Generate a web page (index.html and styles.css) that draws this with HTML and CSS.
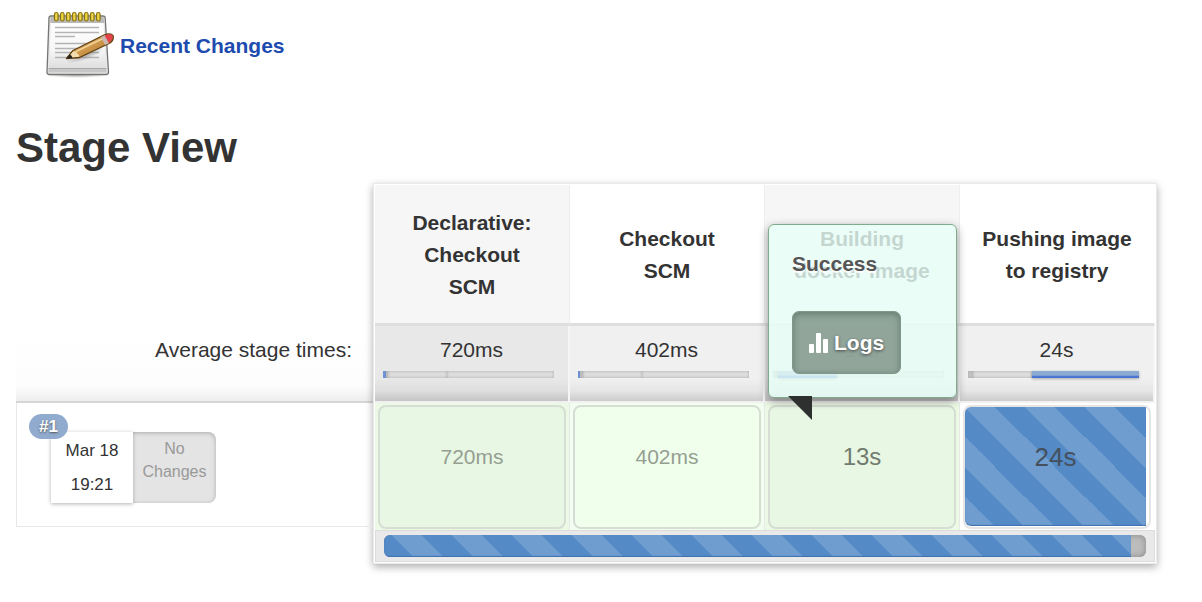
FILE: index.html
```html
<!DOCTYPE html>
<html lang="en">
<head>
<meta charset="utf-8">
<title>Stage View</title>
<link rel="stylesheet" href="styles.css">
</head>
<body>
<main class="page">
  <a class="recent" href="#changes">
    <svg class="notepad" viewBox="0 0 72 72" aria-hidden="true">
      <defs>
        <linearGradient id="paper" x1="0" y1="0" x2="0" y2="1"><stop offset="0" stop-color="#fff"/><stop offset=".6" stop-color="#f6f6f6"/><stop offset="1" stop-color="#dedede"/></linearGradient>
        <linearGradient id="wood" x1="0" y1="0" x2="1" y2="1"><stop offset="0" stop-color="#e9c07c"/><stop offset=".5" stop-color="#d09a4d"/><stop offset="1" stop-color="#a06c25"/></linearGradient>
        <radialGradient id="shade"><stop offset="0" stop-color="#777" stop-opacity=".6"/><stop offset="1" stop-color="#777" stop-opacity="0"/></radialGradient>
      </defs>
      <ellipse cx="35" cy="67" rx="32" ry="3" fill="url(#shade)"/>
      <path d="M9 8h52q2 0 2.200 2l3.300 54q0 2.500-2.500 2.500H7.500Q5 66.500 5 64L7 10q0-2 2-2z" fill="#e8e8e8" stroke="#737571" stroke-width="1.300"/>
      <path d="M8.500 9h53l.7 6H8.200z" fill="#b9bab7"/>
      <path d="M9 15h52.500L64 60H7z" fill="url(#paper)"/>
      <path d="M6.500 61h58l.2 3.500H6.300z" fill="#c7c7c7"/>
      <path d="M6.500 60.500h58" stroke="#aaa"/>
      <path d="M13 19.500h44M13 24.500h44M13 28.500h20M13 35.500h44M13 40.500h44M13 44.500h44M13 49.500h44" stroke="#b4b4b4" stroke-width="1.500"/>
      <ellipse cx="43" cy="47" rx="20" ry="5" fill="url(#shade)" transform="rotate(-20 43 47)"/>
      <g fill="#ead344" stroke="#8a7210" stroke-width="1.200">
        <rect x="12.500" y="4.500" width="3.600" height="8.500" rx="1.800"/><rect x="18.500" y="4.500" width="3.600" height="8.500" rx="1.800"/><rect x="24.500" y="4.500" width="3.600" height="8.500" rx="1.800"/><rect x="30.500" y="4.500" width="3.600" height="8.500" rx="1.800"/><rect x="36.500" y="4.500" width="3.600" height="8.500" rx="1.800"/><rect x="42.500" y="4.500" width="3.600" height="8.500" rx="1.800"/><rect x="48.500" y="4.500" width="3.600" height="8.500" rx="1.800"/><rect x="54.500" y="4.500" width="3.600" height="8.500" rx="1.800"/>
      </g>
      <path d="M24.500 50.500L31 42.500 62 27q7-2.500 9 .5 1.200 4.500-3 7.500L37.500 49.500z" fill="url(#wood)" stroke="#5e3d10" stroke-width="1.300" stroke-linejoin="round"/>
      <path d="M34 43.500L64 29" stroke="#f3d298" stroke-width="1.500"/>
      <path d="M26 49.800l5.300-6.600 3.200.8 1 2 1.500.8.3 2z" fill="#f3dcae"/>
      <path d="M24.500 50.500l3.200-4q2.200.6 2.800 3.400z" fill="#222"/>
      <path d="M59 29l4-1.700 3.800 7.900-3.800 1.700z" fill="#c9b9b0"/>
      <path d="M62.600 27.400q6.200-2.200 7.900.3 1 4.200-3.700 7.100z" fill="#e5414a"/>
    </svg>
    <span>Recent Changes</span>
  </a>

  <h1 class="title">Stage View</h1>

  <div class="stages">
    <section class="side">
      <div class="side-average">Average stage times:</div>
      <div class="build">
        <span class="badge">#1</span>
        <div class="card">
          <div class="card-date"><span>Mar 18</span><span>19:21</span></div>
          <div class="card-changes">No<br>Changes</div>
        </div>
      </div>
    </section>

    <section class="board">
      <table class="grid">
        <thead>
          <tr>
            <th scope="col">Declarative:<br>Checkout<br>SCM</th>
            <th scope="col">Checkout<br>SCM</th>
            <th scope="col">Building<br>docker image</th>
            <th scope="col">Pushing image<br>to registry</th>
          </tr>
        </thead>
        <tbody>
          <tr class="average">
            <td>720ms<div class="meter"><i class="lead tick"></i><i class="mid"></i><i class="rest"></i></div></td>
            <td>402ms<div class="meter"><i class="lead tick small"></i><i class="mid"></i><i class="rest"></i></div></td>
            <td>13s<div class="meter"><i class="lead"></i><i class="mid on"></i><i class="rest"></i></div></td>
            <td>24s<div class="meter"><i class="lead"></i><i class="mid"></i><i class="rest on"></i></div></td>
          </tr>
          <tr class="run">
            <td><div class="box">720ms</div></td>
            <td><div class="box">402ms</div></td>
            <td class="hovered">
              <div class="box">13s</div>
              <div class="popup" role="dialog" aria-label="Stage status">
                <strong class="popup-status">Success</strong>
                <button class="logs" type="button">
                  <svg class="bars" viewBox="0 0 20 20" aria-hidden="true"><rect y="11" width="5" height="9" rx="1"/><rect x="7" width="5" height="20" rx="1"/><rect x="14" y="6" width="5" height="14" rx="1"/></svg>
                  Logs
                </button>
              </div>
            </td>
            <td class="running"><div class="box"><div class="fill">24s</div></div></td>
          </tr>
        </tbody>
      </table>
      <div class="footer">
        <div class="progress" role="progressbar" aria-label="Build progress" aria-valuenow="98" aria-valuemin="0" aria-valuemax="100"><div class="progress-fill" style="width: 98%"></div></div>
      </div>
    </section>
  </div>
</main>
</body>
</html>
```

FILE: styles.css
```css
* { box-sizing: border-box; }

body {
  margin: 0;
  background: #fff;
  color: #333;
  font: 21px/32px "Liberation Sans", Arial, sans-serif;
}

.page { padding: 8px 45px 32px 16px; }

.recent {
  display: inline-flex;
  align-items: center;
  gap: 6px;
  padding-left: 26px;
  color: #204bae;
  font-weight: bold;
  text-decoration: none;
  vertical-align: top;
}

.notepad { width: 72px; height: 72px; }
.recent span { padding-top: 4px; }

.title {
  margin: 44px 0 11px;
  font-size: 42px;
  line-height: 48px;
}

.stages { display: flex; align-items: flex-start; }

.side { flex: 0 0 357px; padding-top: 143px; }

.side-average {
  height: 77px;
  padding: 8px 21px 0 0;
  border-bottom: 2px solid #d5d5d5;
  background: linear-gradient(#fff, #fdfdfd 80%, #ededed);
  text-align: right;
}

.build {
  position: relative;
  height: 124px;
  padding: 29px 0 0 34px;
  border: solid #e8e8e8;
  border-width: 0 0 1px 1px;
}

.badge {
  position: absolute;
  top: 11px;
  left: 12px;
  padding: 0 10px;
  border-radius: 13px;
  background: #90abce;
  color: #fff;
  font-size: 17px;
  font-weight: bold;
  line-height: 25px;
  text-shadow: 0 1px 2px #555;
}

.card {
  display: flex;
  width: 165px;
  height: 71px;
  font-size: 17px;
}

.card-date {
  display: flex;
  flex: 0 0 82px;
  flex-direction: column;
  padding-top: 2px;
  box-shadow: 0 1px 4px rgba(0, 0, 0, .3);
  line-height: 34px;
  text-align: center;
}

.card-changes {
  flex: 1;
  padding-top: 5px;
  border-radius: 0 8px 8px 0;
  background: #e4e4e4;
  box-shadow: inset 0 1px 4px #aaa;
  color: #999;
  font-size: 16px;
  line-height: 23px;
  text-align: center;
}

.board {
  flex: 1;
  padding: 1px;
  border: 1px solid #e9e9e9;
  background: #fff;
  box-shadow: 0 3px 8px rgba(0, 0, 0, .32);
}

.grid {
  width: 100%;
  border-collapse: separate;
  border-spacing: 0;
  table-layout: fixed;
  text-align: center;
}

.grid th {
  height: 141px;
  padding: 2px 8px 0;
  border-right: 1px solid #eee;
  border-bottom: 3px solid #dedede;
}
.grid th:nth-child(odd) { background: #f6f6f6; }
.grid th:last-child { border-right-color: #fff; background: #fff; }

.average td {
  height: 77px;
  padding: 8px 14px 0 8px;
  border-right: 2px solid #f5f5f5;
  border-bottom: 2px solid #f1f1f1;
  background: linear-gradient(#f0f0f0 70%, #e6e6e6 86%, #ccc);
  text-indent: 6px;
  vertical-align: top;
}
.average td:nth-child(odd) { background: linear-gradient(#e8e8e8 70%, #dedede 86%, #c4c4c4); }

.meter {
  display: flex;
  height: 7px;
  margin-top: 5px;
  line-height: 0;
}
.meter i {
  background: #ddd;
  box-shadow: inset 0 0 3px #aaa;
}
.meter .lead { flex: 0 0 5px; background: #c6c6c6; }
.mid { flex: 0 0 59px; }
.rest { flex: 1; }
.meter .tick { border-left: 3px solid #6d91d2; }
.meter .small { border-left-width: 2px; }
.meter .on {
  background: linear-gradient(#8aa9d3 60%, #4a72d0 80%);
  box-shadow: 0 1px 3px rgba(0, 0, 0, .3);
}

.run td {
  padding: 2px 3px 1px;
  border-right: 1px solid #e8e8e8;
  background: #ecfae5;
}
.run td:nth-child(2) { background: #f2fff0; }
.run .running { border-right-color: #fff; background: #fff; }

.box {
  height: 124px;
  padding-top: 34px;
  border: 2px solid #d6ddd2;
  border-radius: 8px;
  background: #e8f7e3;
  color: #959e92;
}
td:nth-child(2) > .box { background: #efffeb; }
.hovered > .box { color: #717a6e; font-size: 24px; }
.running > .box { padding: 0 3px 0 0; border-color: #e5e5e5; background: #fff; }

.fill, .progress-fill {
  background: #548ac6 linear-gradient(45deg, rgba(255, 255, 255, .16) 25%, transparent 25% 50%, rgba(255, 255, 255, .16) 50% 75%, transparent 75%) 0 0 / 60px 60px;
  box-shadow: inset 0 -1px 1px #3f70ae;
}

.fill {
  height: 119px;
  padding-top: 34px;
  border-radius: 6px 0 0 6px;
  color: #45505c;
  font-size: 26px;
}

.hovered { position: relative; }

.popup {
  position: absolute;
  bottom: 132px;
  left: 3px;
  width: 189px;
  height: 174px;
  padding: 23px;
  border: 1px solid #7fac8d;
  border-radius: 6px;
  background: rgba(232, 255, 247, .8);
  box-shadow: 0 3px 10px rgba(0, 0, 0, .4);
  text-align: left;
}

.popup::after {
  content: "";
  position: absolute;
  top: 171px;
  left: 19px;
  width: 24px;
  height: 24px;
  background: #2e302f;
  clip-path: polygon(0 0, 100% 0, 100% 100%);
}

.popup-status {
  display: block;
  color: #555;
  text-shadow: 0 2px 1px #fff;
}

.logs {
  display: flex;
  align-items: center;
  gap: 5px;
  height: 63px;
  margin-top: 31px;
  padding: 0 16px;
  border: 1px solid #80978a;
  border-radius: 7px;
  background: rgba(132, 153, 142, .88);
  box-shadow: inset 0 2px 6px rgba(60, 80, 70, .5);
  color: #fff;
  font: bold 21px/32px "Liberation Sans", Arial, sans-serif;
  text-shadow: 0 1px 3px #444;
}

.bars { width: 20px; height: 20px; fill: #fff; }

.footer {
  padding: 4px 8px;
  border: 1px solid #dcdcdc;
  background: #e9e9e9;
}

.progress {
  height: 22px;
  overflow: hidden;
  border-radius: 6px;
  background: #bcbcbc;
  box-shadow: inset 0 0 6px #888;
}

.progress-fill { height: 100%; background-position: 8px 0; }
```
